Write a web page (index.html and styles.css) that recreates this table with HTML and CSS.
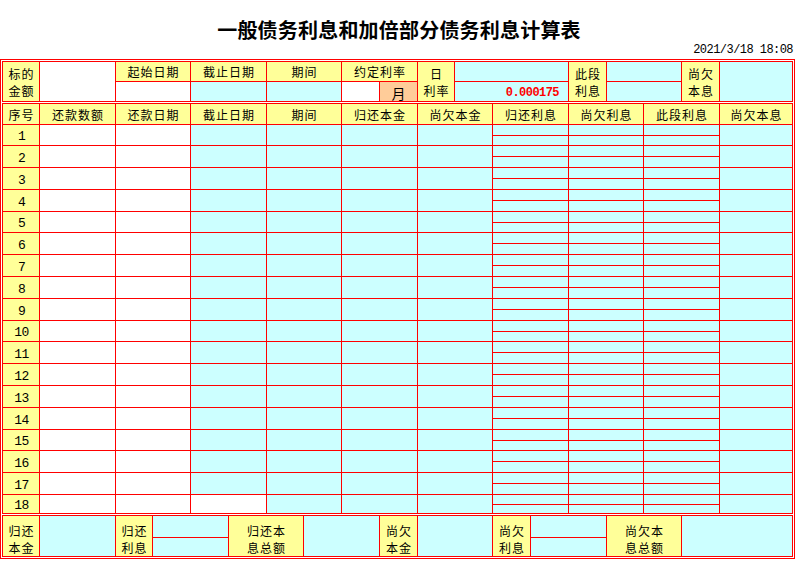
FILE: index.html
```html
<!DOCTYPE html>
<html lang="zh-CN">
<head>
<meta charset="utf-8">
<title>一般债务利息和加倍部分债务利息计算表</title>
<link rel="stylesheet" href="styles.css">
</head>
<body>
<div class="head">
  <div class="title">一般债务利息和加倍部分债务利息计算表</div>
  <div class="date">2021/3/18 18:08</div>
</div>
<div class="frame">
  <div class="grid g1">
    <div class="c y r2">标的<br>金额</div>
    <div class="c w r2"></div>
    <div class="c y">起始日期</div>
    <div class="c y">截止日期</div>
    <div class="c y">期间</div>
    <div class="c y s2">约定利率</div>
    <div class="c y r2">日<br>利率</div>
    <div class="c b"></div>
    <div class="c y r2">此段<br>利息</div>
    <div class="c b"></div>
    <div class="c y r2">尚欠<br>本息</div>
    <div class="c b r2"></div>
    <div class="c w"></div>
    <div class="c b"></div>
    <div class="c b"></div>
    <div class="c w"></div>
    <div class="c o yue">月</div>
    <div class="c b rate">0.000175</div>
    <div class="c b"></div>
  </div>

  <div class="grid g2">
    <div class="c y">序号</div><div class="c y">还款数额</div><div class="c y">还款日期</div><div class="c y">截止日期</div><div class="c y">期间</div><div class="c y">归还本金</div><div class="c y">尚欠本金</div><div class="c y">归还利息</div><div class="c y">尚欠利息</div><div class="c y">此段利息</div><div class="c y">尚欠本息</div>
    <div class="c y n">1</div><div class="c w"></div><div class="c w"></div><div class="c b"></div><div class="c b"></div><div class="c b"></div><div class="c b"></div><div class="sp"><i></i><i></i></div><div class="sp"><i></i><i></i></div><div class="sp"><i></i><i></i></div><div class="c b"></div>
    <div class="c y n">2</div><div class="c w"></div><div class="c w"></div><div class="c b"></div><div class="c b"></div><div class="c b"></div><div class="c b"></div><div class="sp"><i></i><i></i></div><div class="sp"><i></i><i></i></div><div class="sp"><i></i><i></i></div><div class="c b"></div>
    <div class="c y n">3</div><div class="c w"></div><div class="c w"></div><div class="c b"></div><div class="c b"></div><div class="c b"></div><div class="c b"></div><div class="sp"><i></i><i></i></div><div class="sp"><i></i><i></i></div><div class="sp"><i></i><i></i></div><div class="c b"></div>
    <div class="c y n">4</div><div class="c w"></div><div class="c w"></div><div class="c b"></div><div class="c b"></div><div class="c b"></div><div class="c b"></div><div class="sp"><i></i><i></i></div><div class="sp"><i></i><i></i></div><div class="sp"><i></i><i></i></div><div class="c b"></div>
    <div class="c y n">5</div><div class="c w"></div><div class="c w"></div><div class="c b"></div><div class="c b"></div><div class="c b"></div><div class="c b"></div><div class="sp"><i></i><i></i></div><div class="sp"><i></i><i></i></div><div class="sp"><i></i><i></i></div><div class="c b"></div>
    <div class="c y n">6</div><div class="c w"></div><div class="c w"></div><div class="c b"></div><div class="c b"></div><div class="c b"></div><div class="c b"></div><div class="sp"><i></i><i></i></div><div class="sp"><i></i><i></i></div><div class="sp"><i></i><i></i></div><div class="c b"></div>
    <div class="c y n">7</div><div class="c w"></div><div class="c w"></div><div class="c b"></div><div class="c b"></div><div class="c b"></div><div class="c b"></div><div class="sp"><i></i><i></i></div><div class="sp"><i></i><i></i></div><div class="sp"><i></i><i></i></div><div class="c b"></div>
    <div class="c y n">8</div><div class="c w"></div><div class="c w"></div><div class="c b"></div><div class="c b"></div><div class="c b"></div><div class="c b"></div><div class="sp"><i></i><i></i></div><div class="sp"><i></i><i></i></div><div class="sp"><i></i><i></i></div><div class="c b"></div>
    <div class="c y n">9</div><div class="c w"></div><div class="c w"></div><div class="c b"></div><div class="c b"></div><div class="c b"></div><div class="c b"></div><div class="sp"><i></i><i></i></div><div class="sp"><i></i><i></i></div><div class="sp"><i></i><i></i></div><div class="c b"></div>
    <div class="c y n">10</div><div class="c w"></div><div class="c w"></div><div class="c b"></div><div class="c b"></div><div class="c b"></div><div class="c b"></div><div class="sp"><i></i><i></i></div><div class="sp"><i></i><i></i></div><div class="sp"><i></i><i></i></div><div class="c b"></div>
    <div class="c y n">11</div><div class="c w"></div><div class="c w"></div><div class="c b"></div><div class="c b"></div><div class="c b"></div><div class="c b"></div><div class="sp"><i></i><i></i></div><div class="sp"><i></i><i></i></div><div class="sp"><i></i><i></i></div><div class="c b"></div>
    <div class="c y n">12</div><div class="c w"></div><div class="c w"></div><div class="c b"></div><div class="c b"></div><div class="c b"></div><div class="c b"></div><div class="sp"><i></i><i></i></div><div class="sp"><i></i><i></i></div><div class="sp"><i></i><i></i></div><div class="c b"></div>
    <div class="c y n">13</div><div class="c w"></div><div class="c w"></div><div class="c b"></div><div class="c b"></div><div class="c b"></div><div class="c b"></div><div class="sp"><i></i><i></i></div><div class="sp"><i></i><i></i></div><div class="sp"><i></i><i></i></div><div class="c b"></div>
    <div class="c y n">14</div><div class="c w"></div><div class="c w"></div><div class="c b"></div><div class="c b"></div><div class="c b"></div><div class="c b"></div><div class="sp"><i></i><i></i></div><div class="sp"><i></i><i></i></div><div class="sp"><i></i><i></i></div><div class="c b"></div>
    <div class="c y n">15</div><div class="c w"></div><div class="c w"></div><div class="c b"></div><div class="c b"></div><div class="c b"></div><div class="c b"></div><div class="sp"><i></i><i></i></div><div class="sp"><i></i><i></i></div><div class="sp"><i></i><i></i></div><div class="c b"></div>
    <div class="c y n">16</div><div class="c w"></div><div class="c w"></div><div class="c b"></div><div class="c b"></div><div class="c b"></div><div class="c b"></div><div class="sp"><i></i><i></i></div><div class="sp"><i></i><i></i></div><div class="sp"><i></i><i></i></div><div class="c b"></div>
    <div class="c y n">17</div><div class="c w"></div><div class="c w"></div><div class="c b"></div><div class="c b"></div><div class="c b"></div><div class="c b"></div><div class="sp"><i></i><i></i></div><div class="sp"><i></i><i></i></div><div class="sp"><i></i><i></i></div><div class="c b"></div>
    <div class="c y n">18</div><div class="c w"></div><div class="c w"></div><div class="c w"></div><div class="c b"></div><div class="c b"></div><div class="c b"></div><div class="sp"><i></i><i></i></div><div class="sp"><i></i><i></i></div><div class="sp"><i></i><i></i></div><div class="c b"></div>
  </div>

  <div class="grid g3">
    <div class="c y r2">归还<br>本金</div>
    <div class="c b r2"></div>
    <div class="c y r2">归还<br>利息</div>
    <div class="c b"></div>
    <div class="c y r2">归还本<br>息总额</div>
    <div class="c b r2"></div>
    <div class="c y r2">尚欠<br>本金</div>
    <div class="c b r2"></div>
    <div class="c y r2">尚欠<br>利息</div>
    <div class="c b"></div>
    <div class="c y r2">尚欠本<br>息总额</div>
    <div class="c b r2"></div>
    <div class="c b"></div>
    <div class="c b"></div>
  </div>
</div>
</body>
</html>
```

FILE: styles.css
```css
body {
  margin: 0;
  background: #ffffff;
  color: #000000;
  font-family: "Noto Sans CJK SC", "Noto Sans", sans-serif;
}

.head {
  height: 59px;
  display: flex;
  flex-direction: column;
}

.title {
  margin-top: 20px;
  height: 20px;
  line-height: 20px;
  text-align: center;
  font-size: 20px;
  font-weight: bold;
  letter-spacing: 0.2px;
}

.date {
  margin-top: 4px;
  height: 13px;
  line-height: 13px;
  text-align: right;
  padding-right: 5px;
  font-family: "Liberation Mono", monospace;
  font-size: 12px;
  letter-spacing: -0.55px;
}

.frame {
  width: 791px;
  border: 1px solid #ff0000;
  padding: 1px;
  display: flex;
  flex-direction: column;
  gap: 1px;
  background: #ffffff;
}

.grid {
  display: grid;
  gap: 1px;
  background: #ff0000;
  border: 1px solid #ff0000;
}

.g1 {
  grid-template-columns: 36px 75px 74px 75px 74px 37px 37px 36px 113px 37px 74px 37px 72px;
  grid-template-rows: 19px 19px;
}

.g2 {
  grid-template-columns: 36px 75px 74px 75px 74px 75px 74px 75px 74px 75px 72px;
  grid-template-rows: 20px 20px 21px 21px 21px 20px 21px 21px 21px 21px 20px 21px 21px 21px 21px 20px 21px 21px 18px;
}

.g3 {
  grid-template-columns: 36px 75px 36px 75px 74px 75px 37px 74px 37px 75px 74px 110px;
  grid-template-rows: 21px 18px;
}

.c {
  display: flex;
  align-items: center;
  justify-content: center;
  text-align: center;
  font-size: 12px;
  line-height: 17px;
  letter-spacing: 1px;
  padding-left: 1px;
  overflow: hidden;
}

.r2 { grid-row: span 2; }
.s2 { grid-column: span 2; }

.y { background: #ffff99; }
.w { background: #ffffff; }
.b { background: #ccffff; }
.o { background: #ffcc99; }

.g3 .y { padding-top: 5px; }

.n {
  font-family: "Liberation Mono", monospace;
  font-size: 13px;
  letter-spacing: -0.6px;
  padding-top: 3px;
}

.yue {
  align-items: flex-end;
  font-size: 14px;
  line-height: 16px;
  letter-spacing: 0;
  padding-left: 0;
  overflow: visible;
}

.rate {
  justify-content: flex-end;
  padding-right: 9px;
  padding-top: 3px;
  font-family: "Liberation Mono", monospace;
  font-size: 12px;
  font-weight: bold;
  letter-spacing: -0.55px;
  color: #ff0000;
}

.sp {
  display: flex;
  flex-direction: column;
  gap: 1px;
  background: #ff0000;
}

.sp i {
  flex: 1 1 0;
  background: #ccffff;
}
```
